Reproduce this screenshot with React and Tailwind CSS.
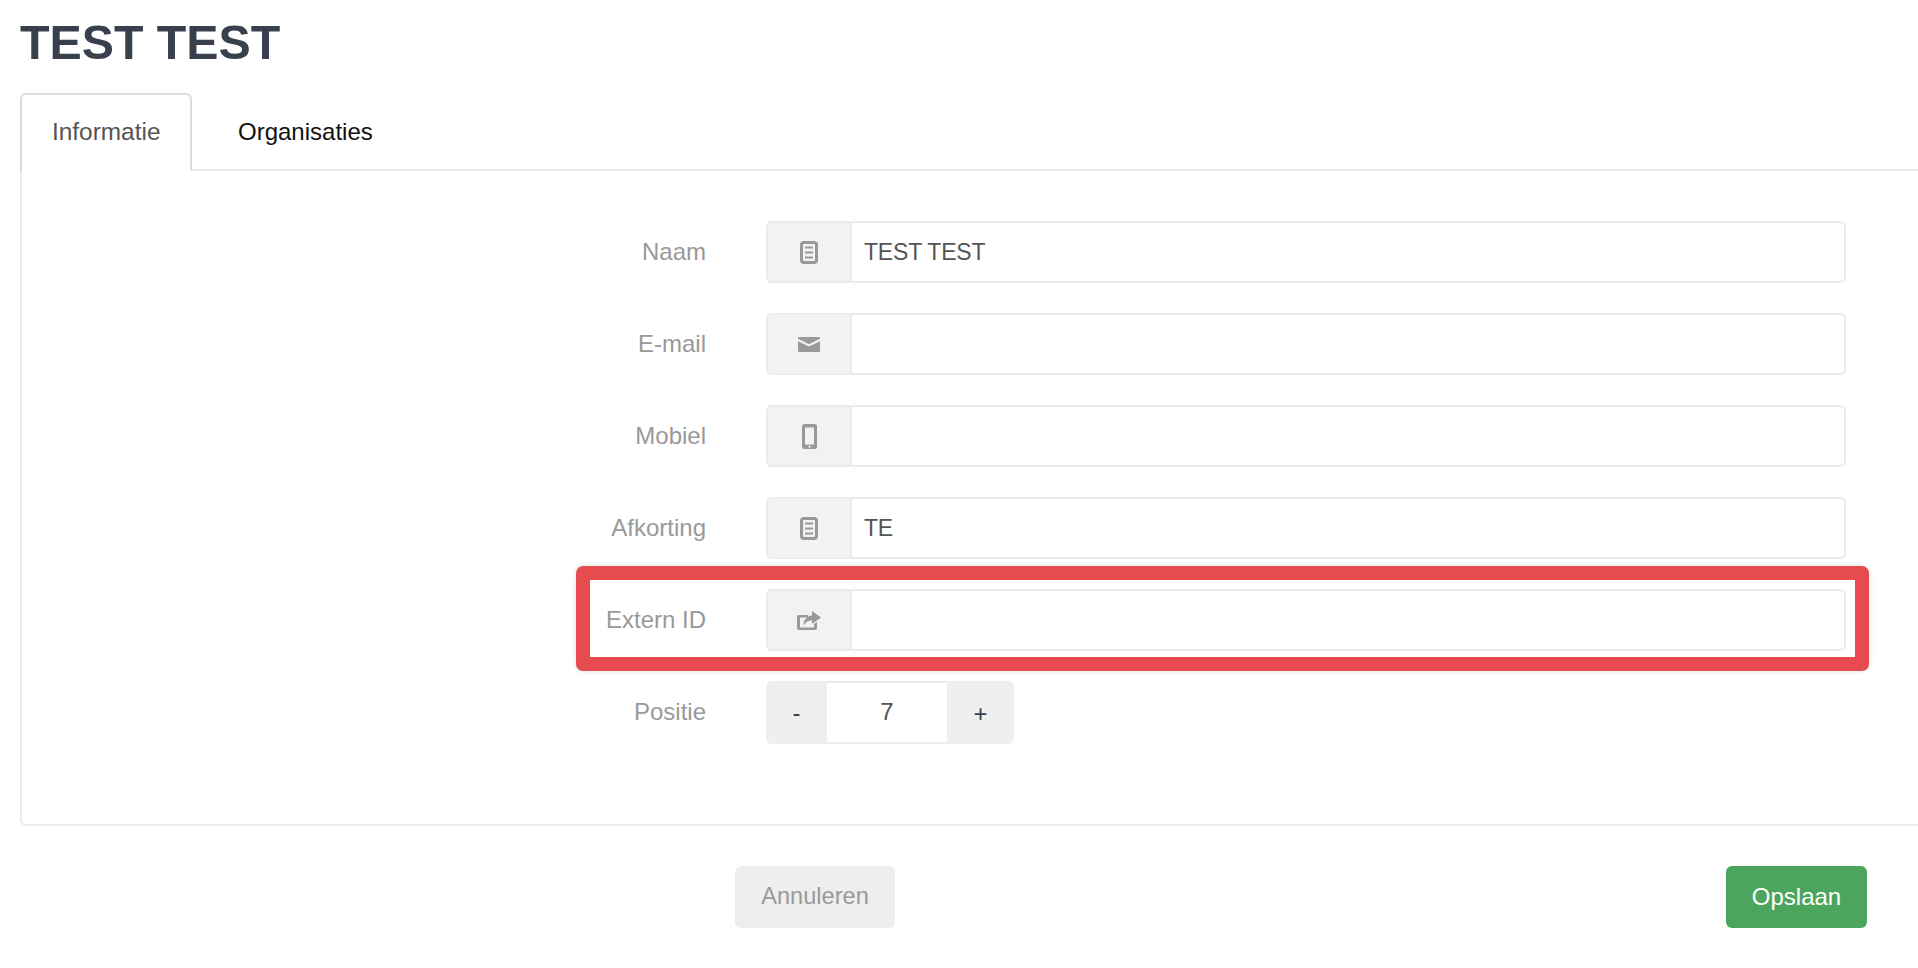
import React from 'react';

const DocIcon = () => (
  <svg width="18" height="23" viewBox="0 0 18 23" fill="none">
    <rect x="1.5" y="1.5" width="15" height="20" rx="2.500" stroke="#999" strokeWidth="3" />
    <path d="M5 6.500h8M5 11.500h8M5 16.500h8" stroke="#999" strokeWidth="2.200" />
  </svg>
);

const MailIcon = () => (
  <svg width="22" height="15" viewBox="0 0 22 15">
    <path d="M0 1.200C0 .5.5 0 1.200 0h19.600c.7 0 1.200.5 1.200 1.200v.6L11 7.200 0 1.800z" fill="#999" />
    <path d="M0 4.200l11 5.400 11-5.400v9.600c0 .7-.5 1.200-1.200 1.200H1.200C.5 15 0 14.500 0 13.800z" fill="#999" />
  </svg>
);

const PhoneIcon = () => (
  <svg width="15" height="25" viewBox="0 0 15 25">
    <path fillRule="evenodd" d="M2.500 0h10A2.500 2.500 0 0 1 15 2.500v20a2.500 2.500 0 0 1-2.500 2.500h-10A2.500 2.500 0 0 1 0 22.500v-20A2.500 2.500 0 0 1 2.500 0zM3 3.500v17h9v-17z" fill="#999" />
    <circle cx="7.500" cy="22.700" r="1.100" fill="#f2f2f2" />
  </svg>
);

const ShareIcon = () => (
  <svg width="24" height="19" viewBox="0 0 24 19">
    <path d="M2 4h9v2.500H3v10h14v-3.500l3-2v6a2 2 0 0 1-2 2H2a2 2 0 0 1-2-2V6a2 2 0 0 1 2-2z" fill="#999" />
    <path d="M15 0l9 6.500-9 6.500V9.500c-3.500 0-6 1-8.500 5 0-5.500 3-9.500 8.500-10z" fill="#999" />
  </svg>
);

const FormRow = ({ label, icon, value, highlight }) => (
  <div className="relative flex items-center h-[62px]">
    {highlight && (
      <div className="absolute left-[554px] right-[-23px] top-[-23px] bottom-[-20px] border-[14px] border-[#e54b4f] rounded-[7px] shadow-[0_0_6px_rgba(0,0,0,0.12)]" />
    )}
    <label className="w-[684px] shrink-0 text-right text-[24px] text-[#999999]">{label}</label>
    <div className="ml-[60px] flex-1 flex h-full border-2 border-[#ebebeb] rounded-[6px] overflow-hidden">
      <span className="w-[84px] shrink-0 flex items-center justify-center bg-[#f2f2f2] border-r-2 border-[#ebebeb]">
        {icon}
      </span>
      <span className="flex-1 pl-[12px] flex items-center text-[23px] tracking-[-0.2px] text-[#555555]">{value}</span>
    </div>
  </div>
);

export default function App() {
  return (
    <div
      className="h-[968px] w-full overflow-hidden bg-white pl-5"
      style={{ fontFamily: '"Liberation Sans", Arial, sans-serif' }}
    >
      <h1 className="pt-[14px] h-[93px] text-[48.300px] leading-[56px] font-bold text-[#383f4d]">TEST TEST</h1>

      <div className="flex h-[78px] border-b-2 border-[#ebebeb]">
        <div className="w-[172px] h-[78px] flex items-center pl-[30px] border-2 border-b-0 border-[#dddddd] rounded-t-[6px] bg-white text-[24.400px] text-[#555555] pb-[2px]">
          Informatie
        </div>
        <div className="pl-[46px] flex items-center text-[24px] text-[#111111] pt-[2px]">Organisaties</div>
      </div>

      <div className="h-[655px] border-l-2 border-b-2 border-[#ebebeb] rounded-bl-[6px] pt-[50px] pr-[72px] flex flex-col gap-[30px]">
        <FormRow label="Naam" icon={<DocIcon />} value="TEST TEST" />
        <FormRow label="E-mail" icon={<MailIcon />} />
        <FormRow label="Mobiel" icon={<PhoneIcon />} />
        <FormRow label="Afkorting" icon={<DocIcon />} value="TE" />
        <FormRow label="Extern ID" icon={<ShareIcon />} highlight />
        <div className="flex items-center h-[63px]">
          <label className="w-[684px] shrink-0 text-right text-[24px] text-[#999999] pb-[2px]">Positie</label>
          <div className="ml-[60px] flex h-full">
            <span className="w-[61px] flex items-center justify-center bg-[#efefef] rounded-l-[6px] text-[24px] text-[#3a3f4a]">-</span>
            <span className="w-[120px] flex items-center justify-center border-y-2 border-[#ebebeb] text-[24px] text-[#555555] pb-[2px]">7</span>
            <span className="w-[67px] flex items-center justify-center bg-[#efefef] rounded-r-[6px] text-[24px] text-[#3a3f4a] pt-[2px]">+</span>
          </div>
        </div>
      </div>

      <div className="pt-[40px] flex">
        <button className="ml-[715px] w-[160px] h-[62px] rounded-[6px] bg-[#eeeeee] text-[23.600px] text-[#999999]">Annuleren</button>
        <button className="ml-[831px] w-[141px] h-[62px] rounded-[6px] bg-[#4ca55c] text-[24px] text-white">Opslaan</button>
      </div>
    </div>
  );
}
